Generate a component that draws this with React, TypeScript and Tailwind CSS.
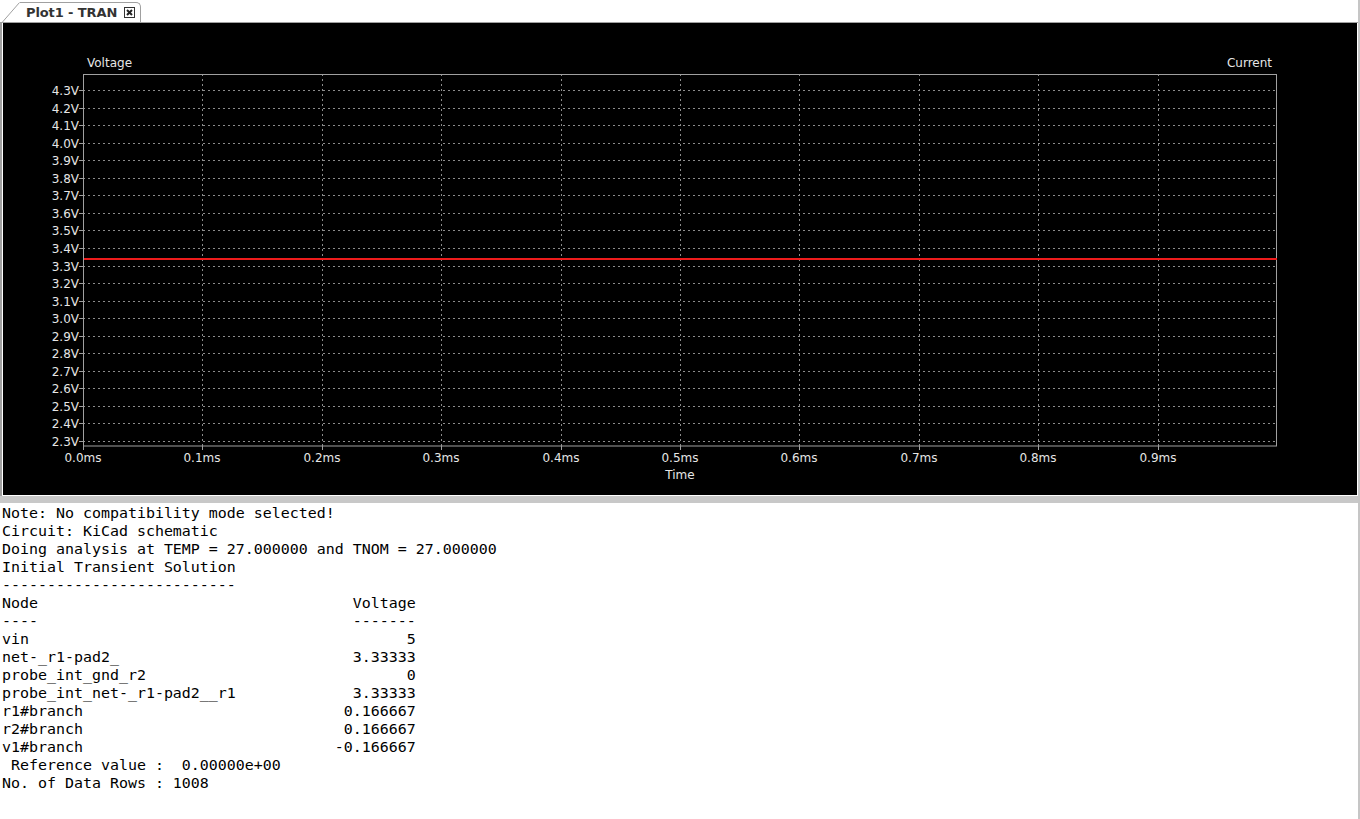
import React from "react";

const yVals = Array.from({ length: 21 }, (_, i) => 4.3 - i * 0.1);
const yOf = (i: number) => Math.floor(90.5 + i * 17.55) + 0.5;
const xOf = (k: number) => Math.round(83 + k * 119.4) + 0.5;

const lines = [
  "Note: No compatibility mode selected!",
  "Circuit: KiCad schematic",
  "Doing analysis at TEMP = 27.000000 and TNOM = 27.000000",
  "Initial Transient Solution",
  "--------------------------",
  "Node                                   Voltage",
  "----                                   -------",
  "vin                                          5",
  "net-_r1-pad2_                          3.33333",
  "probe_int_gnd_r2                             0",
  "probe_int_net-_r1-pad2__r1             3.33333",
  "r1#branch                             0.166667",
  "r2#branch                             0.166667",
  "v1#branch                            -0.166667",
  " Reference value :  0.00000e+00",
  "No. of Data Rows : 1008",
];

function Plot() {
  const font = "'DejaVu Sans', Verdana, sans-serif";
  const redY = 259;
  return (
    <svg width={1354} height={472} viewBox="3 23 1354 472" className="block">
      <g fontFamily={font} fontSize={12} fill="#e6e6e6">
        {yVals.map((v, i) => (
          <g key={i}>
            <line x1={83} x2={1277} y1={yOf(i)} y2={yOf(i)} stroke="#8c8c8c" strokeDasharray="2 3" />
            <line x1={79} x2={83} y1={yOf(i)} y2={yOf(i)} stroke="#a0a0a0" />
            <text x={79} y={yOf(i) + 4.5} textAnchor="end">
              {v.toFixed(1)}V
            </text>
          </g>
        ))}
        {Array.from({ length: 10 }, (_, k) => (
          <g key={k}>
            {k > 0 && (
              <line x1={xOf(k)} x2={xOf(k)} y1={74} y2={446} stroke="#8c8c8c" strokeDasharray="2 3" />
            )}
            <line x1={xOf(k)} x2={xOf(k)} y1={446} y2={450} stroke="#a0a0a0" />
            <text x={xOf(k) - 0.5} y={462} textAnchor="middle">
              {(k / 10).toFixed(1)}ms
            </text>
          </g>
        ))}
        <rect x={83.5} y={74.5} width={1193} height={371.5} fill="none" stroke="#a0a0a0" />
        <line x1={84} x2={1277} y1={redY} y2={redY} stroke="#ee1c1c" strokeWidth={2} />
        <text x={87} y={67}>Voltage</text>
        <text x={1272} y={67} textAnchor="end">
          Current
        </text>
        <text x={680} y={479} textAnchor="middle">
          Time
        </text>
      </g>
    </svg>
  );
}

export default function App() {
  return (
    <div className="w-[1360px] h-[819px] bg-white flex overflow-hidden">
      <div className="w-[1358px] flex flex-col">
        <div className="h-[23px] flex items-end border-b border-[#a0a0a0] bg-white pl-[2px]">
          <div className="flex h-[20px]">
            <svg width={18} height={20} className="block">
              <path d="M0.5 20 L17.5 0.5" stroke="#a0a0a0" fill="none" />
            </svg>
            <div className="flex items-center h-[20px] pl-[6px] pr-[5px] border-t border-r border-[#a0a0a0] rounded-tr-[5px] gap-[7px]">
              <span className="text-[13px] font-bold text-[#333333] leading-none font-['DejaVu_Sans',sans-serif] tracking-[-0.1px]">
                Plot1 - TRAN
              </span>
              <svg width={11} height={11} className="block">
                <rect x={0.5} y={0.5} width={10} height={10} fill="#fff" stroke="#333" />
                <path d="M3 3 L8 8 M8 3 L3 8" stroke="#222" strokeWidth={2} />
              </svg>
            </div>
          </div>
        </div>
        <div className="h-[473px] border-l-2 border-[#a0a0a0]">
          <div className="h-full bg-black border-l border-r border-b border-white">
            <Plot />
          </div>
        </div>
        <div className="h-[7px] bg-[#c8c8c8]" />
        <div className="flex-1 bg-white pt-[1px]">
          <pre className="m-0 pl-[2px] font-['DejaVu_Sans_Mono',monospace] text-[14.95px] leading-[18px] text-black">
            {lines.join("\n")}
          </pre>
        </div>
      </div>
      <div className="w-[2px] bg-[#c6c6c6]" />
    </div>
  );
}
